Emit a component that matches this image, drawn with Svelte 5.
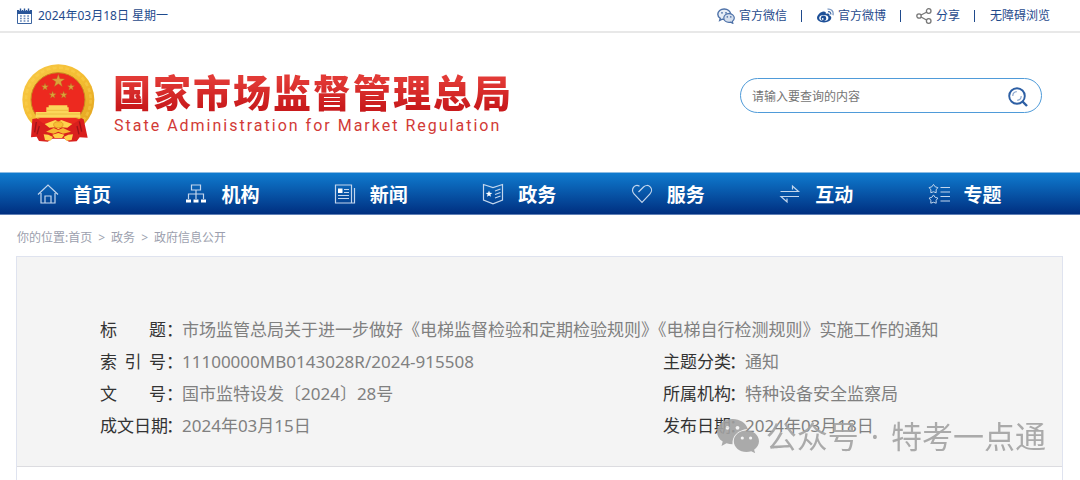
<script>
  const nav = [
    { label: '首页', icon: 'home' },
    { label: '机构', icon: 'org' },
    { label: '新闻', icon: 'news' },
    { label: '政务', icon: 'affairs' },
    { label: '服务', icon: 'heart' },
    { label: '互动', icon: 'swap' },
    { label: '专题', icon: 'topics' }
  ];

  const rows = [
    [{ label: ['标', '题'], value: '市场监管总局关于进一步做好《电梯监督检验和定期检验规则》《电梯自行检测规则》实施工作的通知', wide: true }],
    [{ label: ['索', '引', '号'], value: '11100000MB0143028R/2024-915508' }, { label: ['主', '题', '分', '类'], value: '通知' }],
    [{ label: ['文', '号'], value: '国市监特设发〔2024〕28号' }, { label: ['所', '属', '机', '构'], value: '特种设备安全监察局' }],
    [{ label: ['成', '文', '日', '期'], value: '2024年03月15日' }, { label: ['发', '布', '日', '期'], value: '2024年03月18日' }]
  ];
  const fields = rows.flat();

  function star(cx, cy, r, inner = 0.4) {
    return Array.from({ length: 10 }, (_, i) => {
      const a = -Math.PI / 2 + (i * Math.PI) / 5;
      const d = i % 2 ? r * inner : r;
      return `${(cx + d * Math.cos(a)).toFixed(2)},${(cy + d * Math.sin(a)).toFixed(2)}`;
    }).join(' ');
  }
</script>

<div class="page">
  <div class="topbar">
    <div class="date">
      <svg width="15" height="16" viewBox="0 0 15 16" aria-hidden="true">
        <path d="M0.5 3v12.5h14V3" fill="#fff" stroke="#3b64a0" />
        <path d="M0 2h15v4H0z" fill="#2a5699" />
        <path d="M3.5 0v3M7.5 0v3M11.5 0v3" stroke="#fff" stroke-width="2.400" />
        <path d="M3.5 0.5v3M7.5 0.5v3M11.5 0.5v3" stroke="#2a5699" stroke-width="1.4" />
        <path d="M3 8h9M3 10.500h9M3 13h9" stroke="#6d8cba" stroke-width="1.3" stroke-dasharray="1.8 1.8" />
      </svg>
      <time datetime="2024-03-18">2024年03月18日 星期一</time>
    </div>
    <nav class="tools" aria-label="工具">
      <a href="#wechat">
        <svg width="18" height="16" viewBox="0 0 18 16" aria-hidden="true">
          <path d="M7.2 1C3.6 1 .8 3.2.8 6.2c0 1.8 1 3.200 2.500 4.100L2.700 12.500l2.500-1.300c.7.200 1.300.3 2 .3 3.500 0 6.400-2.300 6.400-5.300S10.700 1 7.200 1z" fill="#e7edf5" stroke="#4d71a8" stroke-width="1.4" />
          <path d="M12 5.600c-2.900 0-5.200 1.900-5.200 4.400s2.300 4.400 5.200 4.400c.6 0 1.100-.1 1.600-.2l2.200 1.100-.5-1.900c1.200-.8 2-2 2-3.400 0-2.500-2.400-4.400-5.300-4.400z" fill="#d5dfed" stroke="#4d71a8" stroke-width="1.200" />
          <g fill="#4d71a8"><circle cx="5" cy="4.800" r=".9" /><circle cx="9" cy="4.800" r=".9" /><circle cx="10.300" cy="8.900" r=".8" /><circle cx="13.800" cy="8.900" r=".8" /></g>
        </svg>
        官方微信
      </a>
      <a href="#weibo">
        <svg width="17" height="15" viewBox="0 0 17 15" aria-hidden="true">
          <path d="M6.500 3.500C3.500 3.700 0 7 0 9.800 0 12.500 3.300 14.500 7 14.500c4.300 0 7.300-2.500 7.300-4.700 0-1.400-1-2.100-2-2.400.6-1.500-.7-2.500-3.500-1.400.5-1.500-.2-2.600-2.300-2.500z" fill="#1d4f97" />
          <ellipse cx="6.800" cy="10" rx="4.600" ry="3" fill="#fff" />
          <circle cx="6.500" cy="10.200" r="2.700" fill="#1d4f97" />
          <circle cx="5.700" cy="10.900" r=".9" fill="#fff" />
          <path d="M11 3.800c1.900-.4 3.200.9 2.700 2.700" fill="none" stroke="#3c67a5" stroke-width="1.200" />
          <path d="M10.500 1.200c3.700-.8 6.500 2.200 5.400 6" fill="none" stroke="#7d9ac4" stroke-width="1.300" />
        </svg>
        官方微博
      </a>
      <a href="#share">
        <svg width="16" height="16" viewBox="0 0 16 16" fill="none" stroke="#777" stroke-width="1.300" aria-hidden="true">
          <path d="M5 7l6-3M5 9l6 3.300" /><circle cx="3" cy="8" r="2.200" /><circle cx="12.700" cy="3" r="2.300" /><circle cx="12.700" cy="13" r="2.300" />
        </svg>
        分享
      </a>
      <a href="#accessible">无障碍浏览</a>
    </nav>
  </div>

  <header class="masthead">
    <a class="brand" href="#home">
      <svg class="emblem" width="73" height="78" viewBox="36 25 219 234" aria-hidden="true">
        <defs>
          <linearGradient id="gold" x1="0" y1="0" x2="1" y2="1">
            <stop offset="0" stop-color="#f7c948" /><stop offset=".5" stop-color="#f4bd32" /><stop offset="1" stop-color="#dfa01d" />
          </linearGradient>
        </defs>
        <ellipse cx="145" cy="132" rx="108" ry="106" fill="url(#gold)" />
        <ellipse cx="145" cy="132" rx="97" ry="96" fill="none" stroke="#ffda5a" stroke-width="8" stroke-dasharray="12 7" opacity=".35" />
        <circle cx="144" cy="132" r="81" fill="#ed291f" stroke="#c98b20" stroke-width="3" />
        <g fill="#dca33a" stroke="#a77822" stroke-width="1">
          <polygon points={star(145, 76, 20)} />
          <polygon points={star(105, 94, 11)} />
          <polygon points={star(183, 94, 11)} />
          <polygon points={star(128, 118, 11)} />
          <polygon points={star(161, 118, 11)} />
        </g>
        <path d="M116 149h56v6h4v14h35v17H77v-17h32v-14h7z" fill="#fbd65a" />
        <path d="M109 164h67M80 175h130" stroke="#e9b034" stroke-width="2" />
        <path d="M70 190h150l-13 22-27 8H111l-26-8z" fill="#e9291f" />
        <path d="M67 190l14-2c12 15 30 21 42 18l22 15 22-15c20 3 35-7 46-19l8 4 12 55-24-1-9 12-23 1-14-9h-36l-14 9-26-2-7-13-17 2z" fill="#d91f1d" />
        <path d="M79 199l-5 31M88 211l-7 25M208 197l7 31M201 211l6 25" stroke="#9e1418" stroke-width="4" />
        <path d="M104 205l18-7 14-5 9 5 9-5 14 5 19 7-15 11-18-1-9 6-9-6-18 1z" fill="#ffd34d" />
        <path d="M108 228l23-11 14 6 14-6 24 11-24 6-14-6-14 6z" fill="#f7b631" />
        <path d="M101 236l14 1 14 7-8 11-16-2zM189 236l-14 1-14 7 8 11 16-2z" fill="#ffd24c" />
        <path d="M127 237l18-5 18 5-7 10h-22z" fill="#ffcf44" />
        <ellipse cx="145" cy="207" rx="14" ry="9" fill="#f8be35" stroke="#d48c1b" stroke-width="2" />
      </svg>
      <span class="wordmark">
        <span class="zh">国家市场监督管理总局</span>
        <span class="en">State Administration for Market Regulation</span>
      </span>
    </a>
    <form class="search" role="search">
      <input type="text" aria-label="搜索" placeholder="请输入要查询的内容" />
      <button type="submit" aria-label="查询">
        <svg width="20" height="20" viewBox="0 0 20 20" fill="none" aria-hidden="true">
          <circle cx="9" cy="9" r="7.800" stroke="#2d5fa4" stroke-width="1.900" />
          <path d="M4.800 9a4.300 4.300 0 0 1 4-4.300M13.200 9a4.300 4.300 0 0 1-4 4.300" stroke="#8ea9cf" stroke-width="1.200" />
          <path d="M14.500 14.500l4.500 4.500" stroke="#2d5fa4" stroke-width="2.400" />
        </svg>
      </button>
    </form>
  </header>

  <nav class="mainnav" aria-label="主导航">
    {#each nav as item}
      <a href={'#' + item.icon}>
        <svg width="22" height="22" viewBox="0 0 22 22" fill="none" stroke="#c3d6ed" stroke-width="1.200" aria-hidden="true">
          {#if item.icon === 'home'}
            <path d="M1 11.500L11 2l10 9.500M4 10v10h14V10M8 20v-7h6v7" />
          {:else if item.icon === 'org'}
            <path d="M6.500 2h9v5h-9zM11 7v4M3.500 16v-5h15v5M11 11v5" />
            <path d="M1 18h5M8.500 18h5M16 18h5" stroke="#fff" stroke-width="3" />
          {:else if item.icon === 'news'}
            <path d="M1.500 2h16v18h-16zM17.500 20h3V5M4 12.500h11M4 15.500h11M10 6.500h5M10 9.500h5" />
            <path d="M4 5.500h4.500V10H4z" fill="#fff" stroke="none" />
          {:else if item.icon === 'affairs'}
            <path d="M1.500 1.500L11 4.500l9.500-3V17L11 20.800 1.500 17zM13 8l5.500-2M13 11.500l5.500-2M13 15l5.500-2" />
            <polygon points={star(7, 11, 3.5)} fill="#fff" stroke="none" />
          {:else if item.icon === 'heart'}
            <path d="M7.500 9l5-5c2-2 5-2 6.700-.2 1.900 2 1.700 5-.2 7L11 19.300 3 10.800C1 8.700 1 5.600 3 3.700 4.500 2.200 6.800 2 8.500 3.300" />
          {:else if item.icon === 'swap'}
            <path d="M1.500 8.500h18l-6-5.500v3.500M20 13.500H2l6 5.500v-3.500" />
          {:else}
            <polygon points={star(5.500, 6, 4.600, 0.6)} stroke-width="1" />
            <polygon points={star(5.500, 16.500, 4.600, 0.6)} stroke-width="1" />
            <path d="M12.500 4.500H22M12.500 9H22M12.500 13.500H22M12.500 18H22" />
          {/if}
        </svg>
        <span>{item.label}</span>
      </a>
    {/each}
  </nav>

  <nav class="crumbs" aria-label="位置">
    <span>你的位置:<a href="#home">首页</a></span><i>&gt;</i><a href="#affairs">政务</a><i>&gt;</i><a href="#open">政府信息公开</a>
  </nav>

  <main class="article">
    <section class="info">
      <dl>
        {#each fields as field}
          <div class="field" class:wide={field.wide}>
            <dt><span class="name">{#each field.label as ch}<span>{ch}</span>{/each}</span>：</dt>
            <dd>{field.value}</dd>
          </div>
        {/each}
      </dl>
      <div class="watermark">
        <svg width="42" height="34" viewBox="0 0 42 34" aria-hidden="true">
          <path d="M15.500 0C7 0 0 5.500 0 12.700c0 4 2.200 7.500 5.700 9.900L4.500 27l5-2.700c2 .6 3.800.9 6 .9C15 17 20.500 11 30.800 10 29.300 4.200 23 0 15.500 0z" fill="#a3a3a3" />
          <path d="M29.500 11.500c-7 0-12.700 4.700-12.700 10.700S22.500 33 29.500 33c1.700 0 3.200-.3 4.700-.8l4 2-1.100-3.500c2.900-2 4.900-5 4.900-8.500 0-6-5.500-10.700-12.500-10.700z" fill="#a3a3a3" />
          <g fill="#f4f4f4"><circle cx="10.500" cy="8.800" r="1.900" /><circle cx="20.500" cy="8.800" r="1.900" /><circle cx="25.300" cy="19" r="1.600" /><circle cx="33.600" cy="19" r="1.600" /></g>
        </svg>
        <span class="account">公众号<span class="dot">·</span>特考一点通</span>
      </div>
    </section>
  </main>
</div>

<style>
  :global(body) { background: #fff; }
  .page {
    display: flex;
    flex-direction: column;
    min-height: 100vh;
    box-sizing: border-box;
    font-family: "Noto Sans", "Noto Sans CJK SC", sans-serif;
    font-size: 12px;
    color: #1f4a8c;
  }
  a { color: inherit; text-decoration: none; }
  svg { flex: none; display: block; }
  .topbar {
    display: flex;
    justify-content: space-between;
    align-items: center;
    padding: 6px 30px 6px 17px;
    line-height: 19px;
    border-bottom: 2px solid #e8e8e8;
  }
  .date { display: flex; align-items: center; gap: 6px; }
  .tools { display: flex; align-items: center; }
  .tools a { display: flex; align-items: center; gap: 4px; }
  .tools a + a::before {
    content: "";
    width: 1px;
    height: 12px;
    margin: 0 11px 0 14px;
    background: #1f4a8c;
  }
  .masthead {
    display: flex;
    justify-content: space-between;
    align-items: flex-start;
    padding: 31px 38px 30px 22px;
  }
  .brand { display: flex; gap: 18px; }
  .wordmark { display: flex; flex-direction: column; padding-top: 6px; }
  .zh {
    font-size: 38px;
    line-height: 44px;
    font-weight: 900;
    letter-spacing: 2px;
    background: linear-gradient(#e23a36 20%, #c91a1c 85%);
    background-clip: text;
    color: transparent;
  }
  .en {
    font-family: Roboto, "Liberation Sans", sans-serif;
    font-size: 16px;
    line-height: 24px;
    letter-spacing: 2px;
    padding-left: 1px;
    color: #d23a36;
  }
  .search {
    display: flex;
    align-items: center;
    flex: 0 1 302px;
    height: 35px;
    margin-top: 14px;
    padding: 0 13px 0 11px;
    box-sizing: border-box;
    border: 1px solid #4f9bd9;
    border-radius: 18px;
  }
  .search input {
    flex: 1;
    min-width: 0;
    padding: 2px 0 0;
    border: 0;
    outline: 0;
    background: none;
    font: inherit;
    color: #333;
  }
  .search input::placeholder { color: #757575; }
  .search button { padding: 2px 0 0; border: 0; background: none; cursor: pointer; }
  .mainnav {
    display: grid;
    grid-template-columns: repeat(7, 1fr);
    padding: 0 4px 0 37px;
    border-top: 1px solid #8dbce3;
    border-bottom: 1px solid #5f7fb5;
    background: linear-gradient(#0f7bcf, #002f80);
  }
  .mainnav a {
    display: flex;
    align-items: center;
    gap: 14px;
    font-size: 19px;
    line-height: 37px;
    font-weight: 700;
    color: #fff;
  }
  .mainnav span { padding-top: 4px; }
  .crumbs {
    display: flex;
    padding: 13px 17px 9px;
    line-height: 19px;
    color: #9c9fae;
  }
  .crumbs i { margin: 0 6px; font-style: normal; }
  .article {
    flex: 1;
    display: flex;
    flex-direction: column;
    margin: 0 17px 0 16px;
    border: 1px solid #dfe3ef;
    border-bottom: 0;
  }
  .info {
    position: relative;
    padding: 57px 83px 24px;
    border-bottom: 1px solid #dcdce0;
    background: #f4f4f4;
  }
  dl {
    display: grid;
    grid-template-columns: 563px 1fr;
    margin: 0;
    font-size: 17px;
    line-height: 32px;
  }
  .field { display: grid; grid-template-columns: 82px 1fr; }
  .wide { grid-column: 1 / -1; }
  dt { display: flex; color: #333; white-space: nowrap; }
  .name { flex: none; display: flex; justify-content: space-between; width: 66px; }
  dd { margin: 0; color: #808080; white-space: nowrap; }
  .watermark {
    position: absolute;
    right: 16px;
    bottom: 8px;
    display: flex;
    align-items: center;
    gap: 7px;
    font-size: 31px;
    line-height: 44px;
    color: #a3a3a3;
    white-space: nowrap;
    opacity: 0.9;
  }
  .dot { margin: 0 12px; }
</style>
